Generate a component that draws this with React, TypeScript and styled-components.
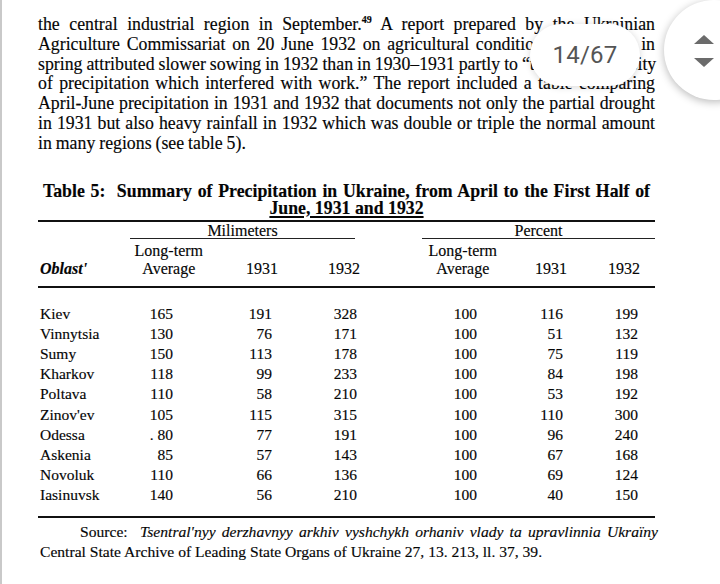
import React from "react";
import styled, { createGlobalStyle } from "styled-components";

const GlobalStyle = createGlobalStyle`
  html, body { margin: 0; padding: 0; background: #fff; }
  body { width: 720px; height: 584px; overflow: hidden; }
`;

const Page = styled.div`
  position: relative;
  width: 720px;
  height: 584px;
  box-sizing: border-box;
  border-left: 2px solid #c9c9c9;
  background: #fff;
  overflow: hidden;
  font-family: "Liberation Serif", "Times New Roman", serif;
  color: #050505;
  -webkit-text-stroke: 0.15px #050505;
`;

const Sheet = styled.div`
  width: 617px;
  margin-left: 36px;
  padding-top: 15px;
`;

const Prose = styled.div`
  font-size: 17.8px;
  line-height: 19.8px;
  word-spacing: -0.5px;
`;

const ProseLine = styled.div<{ $last?: boolean }>`
  white-space: nowrap;
  text-align: ${(p) => (p.$last ? "left" : "justify")};
  text-align-last: ${(p) => (p.$last ? "left" : "justify")};
`;

const Note = styled.sup`
  font-size: 10px;
  font-weight: bold;
  line-height: 0;
  vertical-align: 7px;
`;

const TableTitle = styled.div`
  margin-top: 29px;
  padding: 0 5px;
  font-size: 17.8px;
  font-weight: bold;
  line-height: 17px;
`;

const TitleLine = styled.div<{ $center?: boolean }>`
  white-space: nowrap;
  text-align: ${(p) => (p.$center ? "center" : "justify")};
  text-align-last: ${(p) => (p.$center ? "center" : "justify")};
  text-decoration: ${(p) => (p.$center ? "underline" : "none")};
  text-decoration-thickness: 1.5px;
  text-underline-offset: 2px;
`;

const Rule = styled.div<{ $mt: number }>`
  height: 2px;
  margin-top: ${(p) => p.$mt}px;
  background: #111;
`;

const Grid = styled.div<{ $mt?: number }>`
  display: grid;
  grid-template-columns: 72px 100px 75px 80px 140px 65px 85px;
  margin-top: ${(p) => p.$mt ?? 0}px;
  font-size: 15.5px;
`;

const Group = styled.div<{ $ml: number; $mr: number }>`
  grid-column: span 3;
  margin: 1px ${(p) => p.$mr}px 0 ${(p) => p.$ml}px;
  text-align: center;
  font-size: 16px;
  line-height: 15px;
  border-bottom: 1.5px solid #222;
`;

const HeadCell = styled.div<{ $pr?: number; $italic?: boolean }>`
  align-self: end;
  padding: 3px ${(p) => p.$pr ?? 0}px 8px ${(p) => (p.$italic ? 2 : 0)}px;
  text-align: ${(p) => (p.$italic ? "left" : "right")};
  font-size: 16px;
  line-height: 18px;
  font-style: ${(p) => (p.$italic ? "italic" : "normal")};
  font-weight: ${(p) => (p.$italic ? "bold" : "normal")};
`;

const Stack = styled.span`
  display: inline-block;
  text-align: center;
`;

const Label = styled.div`
  padding-left: 2px;
  line-height: 20.2px;
`;

const Num = styled.div<{ $pr: number }>`
  padding-right: ${(p) => p.$pr}px;
  text-align: right;
  line-height: 20.2px;
`;

const Source = styled.div`
  margin-top: 4px;
  font-size: 15.6px;
  line-height: 20px;
`;

const SourceLead = styled.div`
  white-space: nowrap;
  padding-left: 42px;
  margin-right: -3px;
  text-align: justify;
  text-align-last: justify;
`;

const SourceTail = styled.div`
  padding-left: 2px;
`;

const Italic = styled.i`
  font-style: italic;
`;

const PageBadge = styled.div`
  position: absolute;
  left: 528px;
  top: 24px;
  width: 110px;
  height: 62px;
  border-radius: 31px;
  background: #fff;
  box-shadow: 0 1px 7px rgba(0, 0, 0, 0.16);
  display: flex;
  align-items: center;
  justify-content: center;
  font-family: Roboto, "Noto Sans", sans-serif;
  font-size: 24px;
  color: #555;
  -webkit-text-stroke: 0;
  letter-spacing: 0.2px;
`;

const ScrollKnob = styled.div`
  position: absolute;
  left: 662px;
  top: 0;
  width: 100px;
  height: 100px;
  border-radius: 50%;
  background: #fff;
  box-shadow: 0 2px 9px rgba(0, 0, 0, 0.28);
  display: flex;
  align-items: flex-start;
  padding: 35px 0 0 30px;
  box-sizing: border-box;
`;

const dataRows: [string, string, string, string, string, string, string][] = [
  ["Kiev", "165", "191", "328", "100", "116", "199"],
  ["Vinnytsia", "130", "76", "171", "100", "51", "132"],
  ["Sumy", "150", "113", "178", "100", "75", "119"],
  ["Kharkov", "118", "99", "233", "100", "84", "198"],
  ["Poltava", "110", "58", "210", "100", "53", "192"],
  ["Zinov'ev", "105", "115", "315", "100", "110", "300"],
  ["Odessa", ". 80", "77", "191", "100", "96", "240"],
  ["Askenia", "85", "57", "143", "100", "67", "168"],
  ["Novoluk", "110", "66", "136", "100", "69", "124"],
  ["Iasinuvsk", "140", "56", "210", "100", "40", "150"],
];

const numPads = [37, 13, 8, 28, 7, 17];

export default function App() {
  return (
    <>
      <GlobalStyle />
      <Page>
        <Sheet>
          <Prose>
            <ProseLine>
              the central industrial region in September.<Note>49</Note> A report prepared by the Ukrainian
            </ProseLine>
            <ProseLine>Agriculture Commissariat on 20 June 1932 on agricultural conditions in Ukraine in</ProseLine>
            <ProseLine>spring attributed slower sowing in 1932 than in 1930–1931 partly to “the great intensity</ProseLine>
            <ProseLine>of precipitation which interfered with work.” The report included a table comparing</ProseLine>
            <ProseLine>April-June precipitation in 1931 and 1932 that documents not only the partial drought</ProseLine>
            <ProseLine>in 1931 but also heavy rainfall in 1932 which was double or triple the normal amount</ProseLine>
            <ProseLine $last>in many regions (see table 5).</ProseLine>
          </Prose>

          <TableTitle>
            <TitleLine>Table 5:&nbsp; Summary of Precipitation in Ukraine, from April to the First Half of</TitleLine>
            <TitleLine $center>June, 1931 and 1932</TitleLine>
          </TableTitle>
          <Rule $mt={3} />

          <Grid>
            <div />
            <Group $ml={20} $mr={10}>Milimeters</Group>
            <Group $ml={57} $mr={0}>Percent</Group>

            <HeadCell $italic>Oblast'</HeadCell>
            <HeadCell $pr={7}>
              <Stack>Long-term<br />Average</Stack>
            </HeadCell>
            <HeadCell $pr={7}>1931</HeadCell>
            <HeadCell $pr={5}>1932</HeadCell>
            <HeadCell $pr={8}>
              <Stack>Long-term<br />Average</Stack>
            </HeadCell>
            <HeadCell $pr={3}>1931</HeadCell>
            <HeadCell $pr={15}>1932</HeadCell>
          </Grid>
          <Rule $mt={0} />

          <Grid $mt={16}>
            {dataRows.map((row) => (
              <React.Fragment key={row[0]}>
                <Label>{row[0]}</Label>
                {row.slice(1).map((v, i) => (
                  <Num key={i} $pr={numPads[i]}>{v}</Num>
                ))}
              </React.Fragment>
            ))}
          </Grid>
          <Rule $mt={10} />

          <Source>
            <SourceLead>
              Source:&nbsp; <Italic>Tsentral'nyy derzhavnyy arkhiv vyshchykh orhaniv vlady ta upravlinnia Ukraïny</Italic>
            </SourceLead>
            <SourceTail>Central State Archive of Leading State Organs of Ukraine 27, 13. 213, ll. 37, 39.</SourceTail>
          </Source>
        </Sheet>

        <PageBadge>14/67</PageBadge>
        <ScrollKnob>
          <svg width="20" height="32" viewBox="0 0 20 32">
            <polygon points="0,9 10,0 20,9" fill="#6b6b6b" />
            <polygon points="0,23 20,23 10,32" fill="#6b6b6b" />
          </svg>
        </ScrollKnob>
      </Page>
    </>
  );
}
